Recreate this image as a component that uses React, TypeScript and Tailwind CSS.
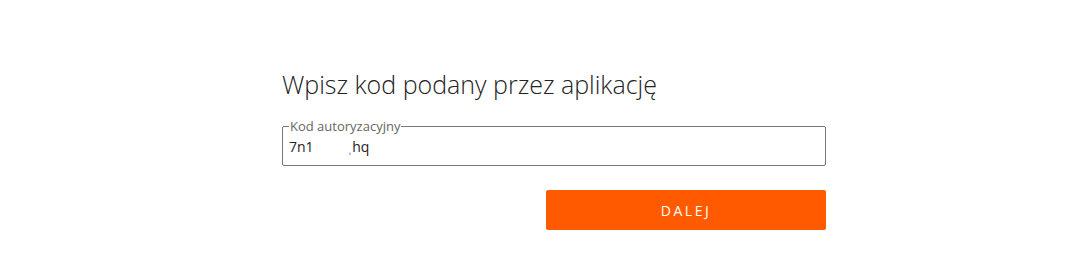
import React from 'react';

export default function App() {
  return (
    <div className="w-[1085px] h-[269px] bg-white" style={{ fontFamily: '"Open Sans", sans-serif' }}>
      <div className="ml-[282px] w-[544px] pt-[66px]">
        <h1 className="text-[25px] font-light leading-[36px] text-[#222]">Wpisz kod podany przez aplikację</h1>
        <fieldset className="mt-[18px] h-[46px] border border-[#777] rounded-[2px] px-[6px]">
          <legend className="px-[1px] text-[13px] leading-[12px] text-[#666]">Kod autoryzacyjny</legend>
          <div className="mt-[5px] text-[14px] leading-[20px] text-[#222]">
            7n1<span className="inline-block w-[34px]" /><span className="text-[#2f6fd6]">ˌ</span>hq
          </div>
        </fieldset>
        <div className="flex justify-end mt-[24px]">
          <button className="w-[280px] h-[40px] rounded-[2px] bg-[#ff5a00] text-white text-[14px] tracking-[2.5px]">DALEJ</button>
        </div>
      </div>
    </div>
  );
}
